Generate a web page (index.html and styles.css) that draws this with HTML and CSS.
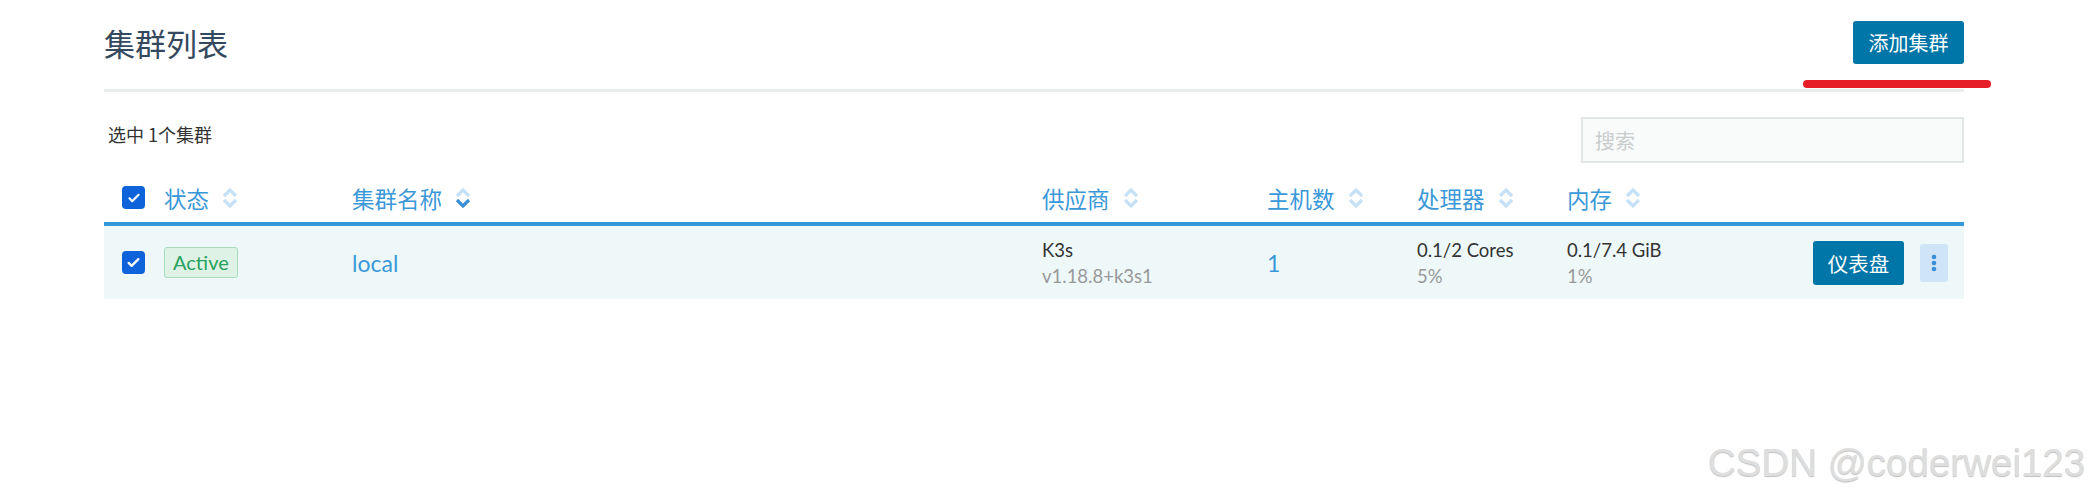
FILE: index.html
```html
<!DOCTYPE html>
<html lang="zh-CN">
<head>
    <meta charset="UTF-8">
    <meta name="viewport" content="width=device-width, initial-scale=1.0">
    <title>集群列表</title>
    <link rel="stylesheet" href="styles.css">
</head>
<body>
    <div class="pagina">
        <div class="cabecalho">
            <h1>集群列表</h1>
            <button class="botao">添加集群</button>
        </div>

        <div class="barra">
            <span class="selecionados">选中 1个集群</span>
            <input class="busca" type="text" placeholder="搜索">
        </div>

        <div class="tabela">
            <div class="linha titulo">
                <div class="col-check"><span class="caixa"><svg viewBox="0 0 20 20" width="14" height="14"><path d="M3.5 10.5l4 4 9-9" fill="none" stroke="#fff" stroke-width="3" stroke-linecap="round" stroke-linejoin="round"/></svg></span></div>
                <div class="th">状态 <svg class="ordem" viewBox="0 0 16 22"><path d="M2 9l6-6 6 6" /><path d="M2 13l6 6 6-6" /></svg></div>
                <div class="th">集群名称 <svg class="ordem" viewBox="0 0 16 22"><path d="M2 9l6-6 6 6" /><path class="ativo" d="M2 13l6 6 6-6" /></svg></div>
                <div class="th">供应商 <svg class="ordem" viewBox="0 0 16 22"><path d="M2 9l6-6 6 6" /><path d="M2 13l6 6 6-6" /></svg></div>
                <div class="th">主机数 <svg class="ordem" viewBox="0 0 16 22"><path d="M2 9l6-6 6 6" /><path d="M2 13l6 6 6-6" /></svg></div>
                <div class="th">处理器 <svg class="ordem" viewBox="0 0 16 22"><path d="M2 9l6-6 6 6" /><path d="M2 13l6 6 6-6" /></svg></div>
                <div class="th">内存 <svg class="ordem" viewBox="0 0 16 22"><path d="M2 9l6-6 6 6" /><path d="M2 13l6 6 6-6" /></svg></div>
                <div></div>
            </div>

            <div class="linha item">
                <div class="col-check"><span class="caixa"><svg viewBox="0 0 20 20" width="15" height="15"><path d="M3.5 10.5l4 4 9-9" fill="none" stroke="#fff" stroke-width="3" stroke-linecap="round" stroke-linejoin="round"/></svg></span></div>
                <div><span class="estado">Active</span></div>
                <div class="azul">local</div>
                <div>
                    <div class="valor">K3s</div>
                    <div class="sub">v1.18.8+k3s1</div>
                </div>
                <div class="azul">1</div>
                <div>
                    <div class="valor">0.1/2 Cores</div>
                    <div class="sub">5%</div>
                </div>
                <div>
                    <div class="valor">0.1/7.4 GiB</div>
                    <div class="sub">1%</div>
                </div>
                <div class="acoes">
                    <button class="botao painel">仪表盘</button>
                    <button class="mais"><svg viewBox="0 0 6 20" width="6" height="20"><circle cx="3" cy="4" r="2.3"/><circle cx="3" cy="10" r="2.3"/><circle cx="3" cy="16" r="2.3"/></svg></button>
                </div>
            </div>
        </div>
    </div>

    <div class="risco"></div>
    <div class="marca">CSDN @coderwei123</div>
</body>
</html>
```

FILE: styles.css
```css
*{
    margin: 0;
    padding: 0;
    box-sizing: border-box;
}
body{
    background-color: #fff;
    font-family: Lato, "Noto Sans CJK SC", sans-serif;
    color: #333;
    width: 2091px;
    height: 496px;
    position: relative;
    overflow: hidden;
}
.pagina{
    margin-left: 104px;
    width: 1860px;
}
.cabecalho{
    display: flex;
    justify-content: space-between;
    align-items: center;
    padding: 21px 0 25px;
    border-bottom: 3px solid #e9eded;
}
.cabecalho h1{
    font-family: "Noto Sans CJK SC", sans-serif;
    font-weight: 400;
    font-size: 31px;
    line-height: 43px;
    color: #34495e;
}
.botao{
    background-color: #0075a8;
    color: #fff;
    border: none;
    border-radius: 3px;
    font-family: "Noto Sans CJK SC", sans-serif;
    font-size: 20px;
    height: 43px;
    width: 111px;
}
.barra{
    display: flex;
    justify-content: space-between;
    align-items: flex-start;
    padding-top: 25px;
}
.selecionados{
    font-family: "Noto Sans CJK SC", sans-serif;
    font-size: 18px;
    line-height: 20px;
    margin-left: 4px;
    margin-top: 7px;
}
.busca{
    width: 383px;
    height: 46px;
    background-color: #f9fbfb;
    border: 2px solid #e1e6e6;
    padding: 0 12px;
    font-family: "Noto Sans CJK SC", sans-serif;
    font-size: 20px;
}
.busca::placeholder{
    color: #c8cccc;
}
.linha{
    display: grid;
    grid-template-columns: 60px 188px 690px 225px 150px 150px 150px 1fr;
    align-items: center;
}
.titulo{
    height: 63px;
    border-bottom: 4px solid #3497da;
    padding-top: 10px;
}
.th{
    display: flex;
    align-items: center;
    gap: 13px;
    font-family: "Noto Sans CJK SC", sans-serif;
    font-size: 22.5px;
    color: #3a98d8;
}
.ordem{
    width: 16px;
    height: 22px;
    fill: none;
    stroke: #c6e0f5;
    stroke-width: 3.2;
}
.ordem .ativo{
    stroke: #3a8fd6;
}
.col-check{
    padding-left: 18px;
}
.caixa{
    display: flex;
    align-items: center;
    justify-content: center;
    width: 23px;
    height: 23px;
    border-radius: 4px;
    background-color: #0e63db;
}
.item{
    height: 73px;
    background-color: #eef8f9;
}
.estado{
    display: inline-block;
    border: 1px solid #a7dcbd;
    background-color: #def3e6;
    color: #27a25f;
    border-radius: 3px;
    font-size: 20px;
    line-height: 29px;
    padding: 0 8px;
}
.azul{
    color: #3a98d8;
    font-size: 23px;
}
.valor{
    font-size: 18.5px;
    line-height: 26px;
    color: #333;
}
.sub{
    font-size: 18.5px;
    line-height: 26px;
    color: #999;
}
.acoes{
    display: flex;
    justify-content: flex-end;
    align-items: center;
    gap: 16px;
    padding-right: 16px;
}
.painel{
    width: 91px;
    height: 44px;
    font-size: 20.5px;
}
.mais{
    width: 28px;
    height: 38px;
    border: none;
    border-radius: 3px;
    background-color: #cfe4f6;
    display: flex;
    align-items: center;
    justify-content: center;
    fill: #3a8fd6;
}
.risco{
    position: absolute;
    left: 1803px;
    top: 80px;
    width: 188px;
    height: 8px;
    border-radius: 4px;
    background-color: #e61e28;
}
.marca{
    position: absolute;
    left: 1708px;
    top: 441px;
    font-family: "Liberation Sans", Arial, sans-serif;
    font-size: 38.5px;
    color: #dedede;
    text-shadow: 0 1px 1px rgba(0, 0, 0, 0.25);
}
```
